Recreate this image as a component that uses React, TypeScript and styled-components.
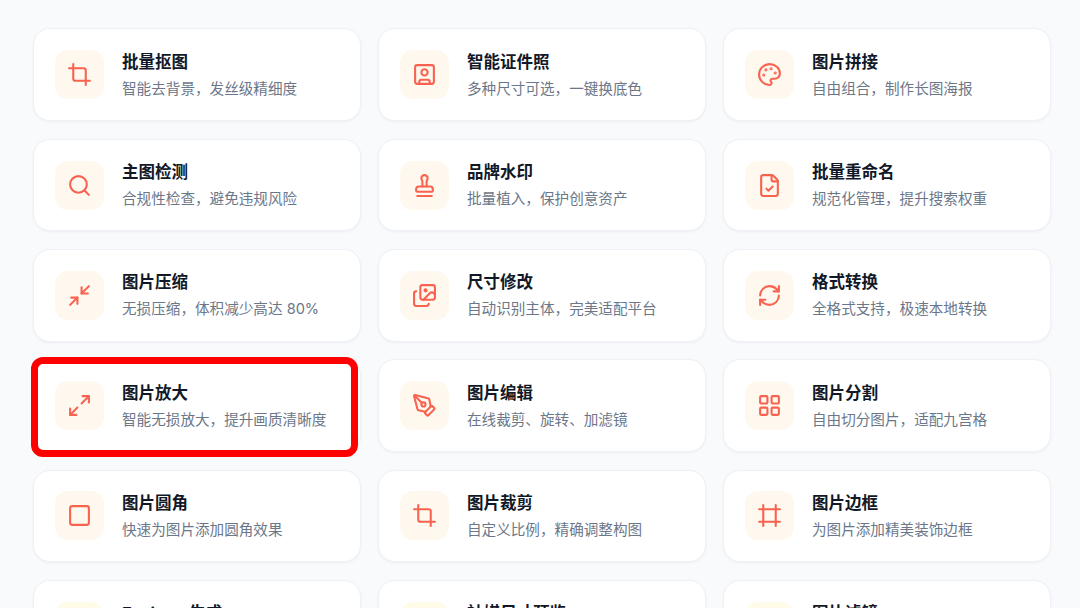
import styled, { createGlobalStyle } from 'styled-components';
import {
  Crop,
  SquareUser,
  Palette,
  Search,
  Stamp,
  FileCheck,
  Minimize2,
  Images,
  RefreshCw,
  Maximize2,
  PenTool,
  LayoutGrid,
  Square,
  Frame,
  Globe,
  Smartphone,
  Wand2,
} from 'lucide-react';
import type { LucideIcon } from 'lucide-react';

const GlobalStyle = createGlobalStyle`
  html, body {
    margin: 0;
    padding: 0;
    height: 608px;
    overflow: hidden;
    background: #f8fafc;
  }
`;

const Page = styled.main`
  box-sizing: border-box;
  height: 608px;
  overflow: hidden;
  padding: 28.4px 29px 0 33px;
  background: #f8fafc;
  font-family: Inter, 'Noto Sans CJK SC', sans-serif;
`;

const Grid = styled.div`
  display: grid;
  grid-template-columns: repeat(3, 327.8px);
  grid-auto-rows: 92.8px;
  column-gap: 17.2px;
  row-gap: 17.5px;
`;

const Card = styled.div<{ $marked?: boolean }>`
  position: relative;
  box-sizing: border-box;
  display: flex;
  align-items: center;
  gap: 18px;
  padding: 0 21px;
  background: #ffffff;
  border: 1px solid #eef2f6;
  border-radius: 17px;
  box-shadow: 0 1px 3px rgba(15, 23, 42, 0.05);

  ${props => props.$marked && `
    &::after {
      content: '';
      position: absolute;
      top: -3.5px;
      left: -3px;
      right: 2px;
      bottom: -6px;
      border: 7px solid #ff0000;
      border-radius: 12px;
    }
  `}
`;

const IconBox = styled.div<{ $warm?: boolean }>`
  flex: none;
  display: flex;
  align-items: center;
  justify-content: center;
  width: 49px;
  height: 49px;
  border-radius: 13px;
  background: ${props => props.$warm ? '#fefbe8' : '#fff8ef'};
  color: #f8624f;
`;

const Texts = styled.div`
  display: flex;
  flex-direction: column;
  gap: 6px;
  min-width: 0;
  padding-top: 2px;
`;

const Title = styled.div`
  font-size: 16.5px;
  line-height: 21px;
  font-weight: 700;
  color: #111827;
`;

const Desc = styled.div`
  font-size: 14.6px;
  line-height: 21px;
  color: #6b7789;
  white-space: nowrap;
`;

interface Tool {
  title: string;
  desc: string;
  icon: LucideIcon;
  marked?: boolean;
  warm?: boolean;
}

const tools: Tool[] = [
  { title: '批量抠图', desc: '智能去背景，发丝级精细度', icon: Crop },
  { title: '智能证件照', desc: '多种尺寸可选，一键换底色', icon: SquareUser },
  { title: '图片拼接', desc: '自由组合，制作长图海报', icon: Palette },
  { title: '主图检测', desc: '合规性检查，避免违规风险', icon: Search },
  { title: '品牌水印', desc: '批量植入，保护创意资产', icon: Stamp },
  { title: '批量重命名', desc: '规范化管理，提升搜索权重', icon: FileCheck },
  { title: '图片压缩', desc: '无损压缩，体积减少高达 80%', icon: Minimize2 },
  { title: '尺寸修改', desc: '自动识别主体，完美适配平台', icon: Images },
  { title: '格式转换', desc: '全格式支持，极速本地转换', icon: RefreshCw },
  { title: '图片放大', desc: '智能无损放大，提升画质清晰度', icon: Maximize2, marked: true },
  { title: '图片编辑', desc: '在线裁剪、旋转、加滤镜', icon: PenTool },
  { title: '图片分割', desc: '自由切分图片，适配九宫格', icon: LayoutGrid },
  { title: '图片圆角', desc: '快速为图片添加圆角效果', icon: Square },
  { title: '图片裁剪', desc: '自定义比例，精确调整构图', icon: Crop },
  { title: '图片边框', desc: '为图片添加精美装饰边框', icon: Frame },
  { title: 'Favicon 生成', desc: '一键生成网站图标', icon: Globe, warm: true },
  { title: '社媒尺寸预览', desc: '多平台尺寸实时预览', icon: Smartphone, warm: true },
  { title: '图片滤镜', desc: '多种滤镜，一键美化', icon: Wand2, warm: true },
];

export default function App() {
  return (
    <Page>
      <GlobalStyle />
      <Grid>
        {tools.map(tool => (
          <Card key={tool.title} $marked={tool.marked}>
            <IconBox $warm={tool.warm}>
              <tool.icon size={25} strokeWidth={2} />
            </IconBox>
            <Texts>
              <Title>{tool.title}</Title>
              <Desc>{tool.desc}</Desc>
            </Texts>
          </Card>
        ))}
      </Grid>
    </Page>
  );
}
